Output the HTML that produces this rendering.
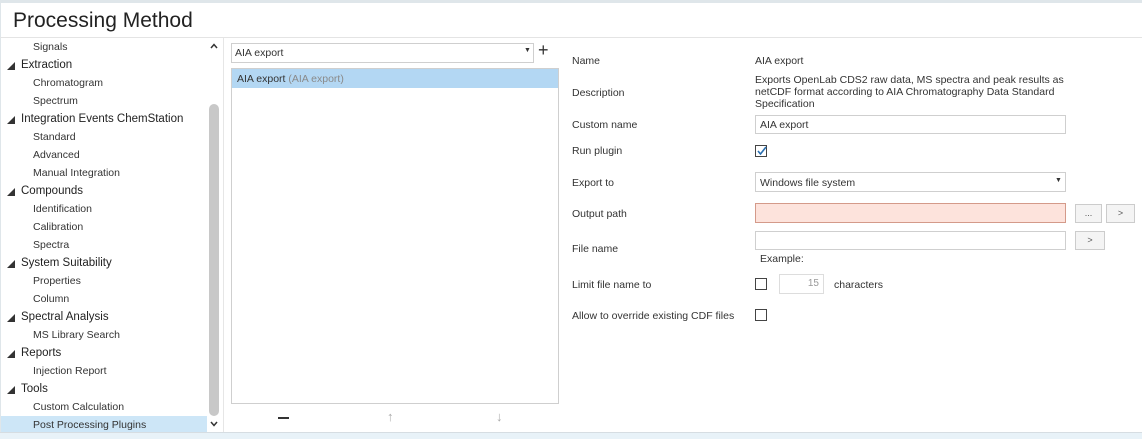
<!DOCTYPE html>
<html><head><meta charset="utf-8"><style>
*{margin:0;padding:0;box-sizing:border-box}
body{width:1142px;height:439px;background:#fff;font-family:"Liberation Sans",sans-serif;font-size:10.5px;color:#333;position:relative;overflow:hidden}
.a{position:absolute;white-space:nowrap}
.t{position:absolute;white-space:nowrap;font-size:10.5px;color:#333}
.h{font-size:11.5px;color:#222}
.tri{position:absolute;width:0;height:0;border-left:8px solid transparent;border-bottom:8px solid #333}
.box{position:absolute;border:1px solid #cfcfcf;background:#fff}
.btn{position:absolute;border:1px solid #ccc;background:#f4f4f4;text-align:center;font-size:9px;color:#555;line-height:17px}
.cb{position:absolute;width:12px;height:12px;border:1px solid #444;background:#fff}
#tree{position:absolute;left:0;top:2px;width:206px;height:440px}
</style></head><body>
<div class="a" style="left:0;top:0;width:1142px;height:3px;background:#dfe6ea"></div>
<div class="a" style="left:0;top:0;width:1px;height:439px;background:#dfe6ea"></div>
<div class="a" style="left:13px;top:9px;font-size:21px;color:#222">Processing Method</div>
<div class="a" style="left:0;top:37px;width:1142px;height:1px;background:#e4e4e4"></div>
<div class="a" style="left:1px;top:416px;width:206px;height:17px;background:#cde6f7"></div>
<div id="tree">
<div class="t" style="left:33px;top:39px">Signals</div>
<div class="tri" style="left:7px;top:60px"></div><div class="t h" style="left:21px;top:57px">Extraction</div>
<div class="t" style="left:33px;top:75px">Chromatogram</div>
<div class="t" style="left:33px;top:93px">Spectrum</div>
<div class="tri" style="left:7px;top:114px"></div><div class="t h" style="left:21px;top:111px">Integration Events ChemStation</div>
<div class="t" style="left:33px;top:129px">Standard</div>
<div class="t" style="left:33px;top:147px">Advanced</div>
<div class="t" style="left:33px;top:165px">Manual Integration</div>
<div class="tri" style="left:7px;top:186px"></div><div class="t h" style="left:21px;top:183px">Compounds</div>
<div class="t" style="left:33px;top:201px">Identification</div>
<div class="t" style="left:33px;top:219px">Calibration</div>
<div class="t" style="left:33px;top:237px">Spectra</div>
<div class="tri" style="left:7px;top:258px"></div><div class="t h" style="left:21px;top:255px">System Suitability</div>
<div class="t" style="left:33px;top:273px">Properties</div>
<div class="t" style="left:33px;top:291px">Column</div>
<div class="tri" style="left:7px;top:312px"></div><div class="t h" style="left:21px;top:309px">Spectral Analysis</div>
<div class="t" style="left:33px;top:327px">MS Library Search</div>
<div class="tri" style="left:7px;top:348px"></div><div class="t h" style="left:21px;top:345px">Reports</div>
<div class="t" style="left:33px;top:363px">Injection Report</div>
<div class="tri" style="left:7px;top:384px"></div><div class="t h" style="left:21px;top:381px">Tools</div>
<div class="t" style="left:33px;top:399px">Custom Calculation</div>
<div class="t" style="left:33px;top:417px">Post Processing Plugins</div>
</div>
<div class="a" style="left:207px;top:38px;width:14px;height:395px;background:#fff"></div>
<div class="a" style="left:209px;top:104px;width:10px;height:312px;background:#c8c8c8;border-radius:5px"></div>
<svg class="a" style="left:209px;top:42px" width="10" height="8"><path d="M2 6 L5 2.5 L8 6" stroke="#333" stroke-width="1.5" fill="none"/></svg>
<svg class="a" style="left:209px;top:420px" width="10" height="8"><path d="M2 2 L5 5.5 L8 2" stroke="#333" stroke-width="1.5" fill="none"/></svg>
<div class="a" style="left:223px;top:38px;width:1px;height:395px;background:#e6e6e6"></div>
<div class="box" style="left:231px;top:43px;width:303px;height:20px"></div>
<div class="t" style="left:235px;top:47px">AIA export</div>
<div class="a" style="left:524px;top:47px;font-size:7px">&#9660;</div>
<div class="a" style="left:538px;top:40px;font-size:18px;color:#333">+</div>
<div class="box" style="left:231px;top:68px;width:328px;height:336px"></div>
<div class="a" style="left:232px;top:69px;width:326px;height:19px;background:#b3d7f3"></div>
<div class="t" style="left:237px;top:73px">AIA export <span style="color:#8a8a8a">(AIA export)</span></div>
<div class="a" style="left:278px;top:417px;width:11px;height:2px;background:#333"></div>
<div class="a" style="left:387px;top:409px;font-size:13px;color:#aaa">&#8593;</div>
<div class="a" style="left:496px;top:409px;font-size:13px;color:#aaa">&#8595;</div>
<div class="t" style="left:572px;top:55px">Name</div>
<div class="t" style="left:755px;top:55px">AIA export</div>
<div class="t" style="left:572px;top:87px">Description</div>
<div class="t" style="left:755px;top:74px;line-height:12px">Exports OpenLab CDS2 raw data, MS spectra and peak results as<br>netCDF format according to AIA Chromatography Data Standard<br>Specification</div>
<div class="t" style="left:572px;top:119px">Custom name</div>
<div class="box" style="left:755px;top:115px;width:311px;height:19px"></div>
<div class="t" style="left:760px;top:119px">AIA export</div>
<div class="t" style="left:572px;top:145px">Run plugin</div>
<div class="cb" style="left:755px;top:145px"></div>
<svg class="a" style="left:755px;top:144px" width="13" height="13"><path d="M3 7 L5.5 10 L11 3" stroke="#2a6fb0" stroke-width="1.6" fill="none"/></svg>
<div class="t" style="left:572px;top:177px">Export to</div>
<div class="box" style="left:755px;top:172px;width:311px;height:20px"></div>
<div class="t" style="left:760px;top:177px">Windows file system</div>
<div class="a" style="left:1055px;top:177px;font-size:7px">&#9660;</div>
<div class="t" style="left:572px;top:208px">Output path</div>
<div class="a" style="left:755px;top:203px;width:311px;height:20px;background:#fde3dc;border:1px solid #d49a8a"></div>
<div class="btn" style="left:1075px;top:204px;width:27px;height:19px">...</div>
<div class="btn" style="left:1106px;top:204px;width:29px;height:19px">&gt;</div>
<div class="t" style="left:572px;top:243px">File name</div>
<div class="box" style="left:755px;top:231px;width:311px;height:19px"></div>
<div class="btn" style="left:1075px;top:231px;width:30px;height:19px">&gt;</div>
<div class="t" style="left:760px;top:253px">Example:</div>
<div class="t" style="left:572px;top:279px">Limit file name to</div>
<div class="cb" style="left:755px;top:278px"></div>
<div class="a" style="left:779px;top:274px;width:45px;height:20px;border:1px solid #ddd;color:#999;text-align:right;padding-right:4px;line-height:18px;font-size:10px">15</div>
<div class="t" style="left:834px;top:279px">characters</div>
<div class="t" style="left:572px;top:310px">Allow to override existing CDF files</div>
<div class="cb" style="left:755px;top:309px"></div>
<div class="a" style="left:0;top:432px;width:1142px;height:1px;background:#d6dde2"></div>
<div class="a" style="left:0;top:433px;width:1142px;height:6px;background:#e8f2f8"></div>
</body></html>
